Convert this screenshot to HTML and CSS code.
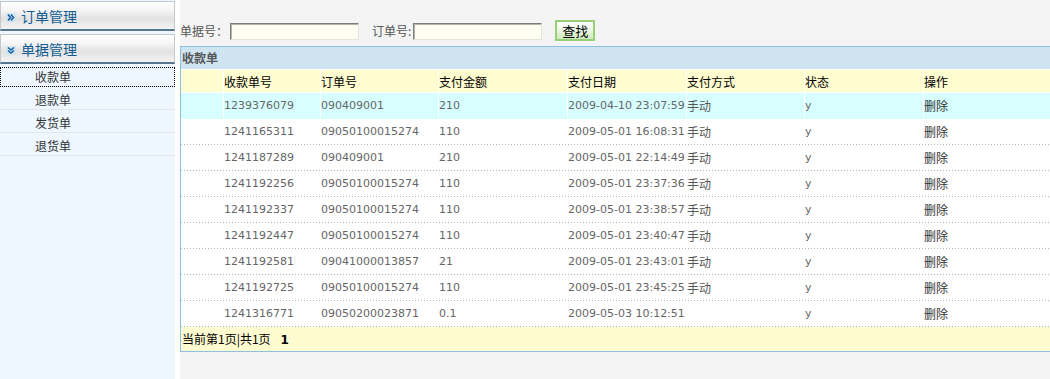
FILE: index.html
```html
<!DOCTYPE html>
<html lang="zh-CN">
<head>
<meta charset="utf-8">
<title>收款单</title>
<link rel="stylesheet" href="styles.css">
</head>
<body>
<aside class="sidebar">
  <div class="menu-head">
    <span class="menu-icon"><svg width="10" height="9" viewBox="0 0 10 9"><path d="M2 1.5 L4.5 4.5 L2 7.5 M5 1.5 L7.5 4.5 L5 7.5" fill="none" stroke="#1560a8" stroke-width="1.6"/></svg></span>
    <span class="menu-title">订单管理</span>
  </div>
  <div class="menu-head">
    <span class="menu-icon"><svg width="10" height="9" viewBox="0 0 10 9"><path d="M2 1.5 L5 4 L8 1.5 M2 4.5 L5 7 L8 4.5" fill="none" stroke="#1560a8" stroke-width="1.6"/></svg></span>
    <span class="menu-title">单据管理</span>
  </div>
  <ul class="menu-list">
    <li><a class="menu-link active">收款单</a></li>
    <li><a class="menu-link">退款单</a></li>
    <li><a class="menu-link">发货单</a></li>
    <li><a class="menu-link">退货单</a></li>
  </ul>
</aside>
<main class="main">
  <div class="search">
    <label class="lbl">单据号：</label>
    <span class="input"></span>
    <label class="lbl lbl2">订单号:</label>
    <span class="input"></span>
    <button class="btn">查找</button>
  </div>
  <section class="panel">
    <div class="caption">收款单</div>
    <div class="row head">
      <div class="c"></div><div class="c">收款单号</div><div class="c">订单号</div><div class="c">支付金额</div><div class="c">支付日期</div><div class="c">支付方式</div><div class="c">状态</div><div class="c">操作</div>
    </div>
    <div class="row data hl">
      <div class="c"></div><div class="c n">1239376079</div><div class="c n">090409001</div><div class="c n">210</div><div class="c n">2009-04-10 23:07:59</div><div class="c t">手动</div><div class="c n">y</div><div class="c t op">删除</div>
    </div>
    <div class="row data">
      <div class="c"></div><div class="c n">1241165311</div><div class="c n">09050100015274</div><div class="c n">110</div><div class="c n">2009-05-01 16:08:31</div><div class="c t">手动</div><div class="c n">y</div><div class="c t op">删除</div>
    </div>
    <div class="row data">
      <div class="c"></div><div class="c n">1241187289</div><div class="c n">090409001</div><div class="c n">210</div><div class="c n">2009-05-01 22:14:49</div><div class="c t">手动</div><div class="c n">y</div><div class="c t op">删除</div>
    </div>
    <div class="row data">
      <div class="c"></div><div class="c n">1241192256</div><div class="c n">09050100015274</div><div class="c n">110</div><div class="c n">2009-05-01 23:37:36</div><div class="c t">手动</div><div class="c n">y</div><div class="c t op">删除</div>
    </div>
    <div class="row data">
      <div class="c"></div><div class="c n">1241192337</div><div class="c n">09050100015274</div><div class="c n">110</div><div class="c n">2009-05-01 23:38:57</div><div class="c t">手动</div><div class="c n">y</div><div class="c t op">删除</div>
    </div>
    <div class="row data">
      <div class="c"></div><div class="c n">1241192447</div><div class="c n">09050100015274</div><div class="c n">110</div><div class="c n">2009-05-01 23:40:47</div><div class="c t">手动</div><div class="c n">y</div><div class="c t op">删除</div>
    </div>
    <div class="row data">
      <div class="c"></div><div class="c n">1241192581</div><div class="c n">09041000013857</div><div class="c n">21</div><div class="c n">2009-05-01 23:43:01</div><div class="c t">手动</div><div class="c n">y</div><div class="c t op">删除</div>
    </div>
    <div class="row data">
      <div class="c"></div><div class="c n">1241192725</div><div class="c n">09050100015274</div><div class="c n">110</div><div class="c n">2009-05-01 23:45:25</div><div class="c t">手动</div><div class="c n">y</div><div class="c t op">删除</div>
    </div>
    <div class="row data">
      <div class="c"></div><div class="c n">1241316771</div><div class="c n">09050200023871</div><div class="c n">0.1</div><div class="c n">2009-05-03 10:12:51</div><div class="c t"></div><div class="c n">y</div><div class="c t op">删除</div>
    </div>
    <div class="pager">当前第1页|共1页<b class="page-num">1</b></div>
  </section>
</main>
</body>
</html>
```

FILE: styles.css
```css
html, body {
  margin: 0;
  padding: 0;
  height: 100%;
}
body {
  display: flex;
  background: #fff;
  font-family: "DejaVu Sans", "Noto Sans CJK SC", sans-serif;
  font-size: 12px;
  color: #000;
  overflow: hidden;
}
.sidebar {
  width: 175px;
  flex: none;
  background: #eef6ff;
  height: 100%;
  margin-right: 5px;
}
.menu-head {
  margin-top: 1px;
  height: 27px;
  border: 1px solid #c4c8cc;
  border-bottom: 2px solid #56758f;
  background: linear-gradient(#ffffff 0%, #f6f6f6 30%, #e2e2e2 60%, #eeeeee 90%, #f4f4f4 100%);
  display: flex;
  align-items: center;
  padding-left: 5px;
}
.menu-head + .menu-head {
  margin-top: 3px;
}
.menu-icon {
  width: 10px;
  height: 9px;
  background: #d4e6f0;
  display: flex;
  margin-top: 3px;
}
.menu-title {
  margin-left: 5px;
  font-family: "Noto Sans CJK SC", sans-serif;
  font-size: 14px;
  color: #125c92;
  line-height: 16px;
}
.menu-list {
  list-style: none;
  margin: 0;
  padding: 0;
}
.menu-list li {
  height: 18px;
  padding-top: 4px;
  border-bottom: 1px solid #e2e6ea;
}
.menu-link {
  display: block;
  margin: 0 1px;
  height: 18px;
  line-height: 18px;
  padding-left: 34px;
  color: #333;
  font-family: "Noto Sans CJK SC", sans-serif;
  font-size: 12px;
}
.menu-link.active {
  outline: 1px dotted #000;
}
.main {
  flex: 1;
  box-sizing: border-box;
  background: #f4f4f4;
  height: 100%;
  padding-top: 20px;
}
.search {
  display: flex;
  align-items: center;
  height: 21px;
}
.lbl {
  color: #555;
  font-family: "Noto Sans CJK SC", sans-serif;
  font-size: 12px;
  margin-right: 2px;
}
.lbl2 {
  margin-left: 13px;
}
.input {
  display: block;
  box-sizing: border-box;
  width: 129px;
  height: 17px;
  margin-top: 2px;
  background: #fffef2;
  border: 1px solid;
  border-color: #7e7e76 #e4e4dc #e4e4dc #7e7e76;
  box-shadow: inset 1px 1px 0 #b4b4aa;
}
.btn {
  box-sizing: border-box;
  width: 40px;
  height: 21px;
  margin-left: 13px;
  padding: 0;
  border: 2px solid #97d075;
  background: linear-gradient(#ffffff, #f0f9ea 40%, #cfe9bd);
  font-family: "Noto Sans CJK SC", sans-serif;
  font-size: 13px;
  color: #000;
  line-height: 15px;
}
.panel {
  margin-top: 5px;
  border-left: 1px solid #8cc2df;
  border-top: 1px solid #8cc2df;
  border-bottom: 1px solid #8cc2df;
  background: #fff;
}
.caption {
  height: 22px;
  line-height: 22px;
  border-bottom: 1px solid #fff;
  background: #cee4f0;
  color: #555;
  font-weight: bold;
  font-family: "Noto Sans CJK SC", sans-serif;
  padding-left: 1px;
}
.row {
  display: grid;
  grid-template-columns: 42px 97px 118px 129px 119px 118px 119px 1fr;
}
.c {
  box-sizing: border-box;
  border-left: 1px solid #fff;
  white-space: nowrap;
  display: flex;
  align-items: center;
}
.c:first-child {
  border-left: 0;
}
.head {
  height: 23px;
  border-bottom: 1px solid #fff;
  box-sizing: border-box;
  background: #fffcd0;
  font-family: "Noto Sans CJK SC", sans-serif;
  font-size: 12px;
  color: #000;
}
.data {
  height: 26px;
  box-sizing: border-box;
  padding-bottom: 1px;
  background-image: repeating-linear-gradient(to right, #b4b4b4 0 1px, transparent 1px 3px);
  background-size: 100% 1px;
  background-position: left bottom;
  background-repeat: no-repeat;
}
.data .c {
  border-left-color: transparent;
}
.data.hl {
  background: #d7ffff;
}
.data.hl .c {
  border-left-color: #fff;
}
.data.hl .c:first-child {
  border-left: 0;
}
.n {
  font-family: "DejaVu Sans", sans-serif;
  font-size: 11px;
  color: #666;
}
.t {
  font-family: "Noto Sans CJK SC", sans-serif;
  font-size: 12px;
  color: #555;
}
.op {
  color: #333;
}
.pager {
  height: 24px;
  line-height: 24px;
  background: #fffbd1;
  padding-left: 1px;
  font-family: "Noto Sans CJK SC", sans-serif;
  font-size: 12px;
  color: #000;
}
.page-num {
  margin-left: 10px;
  font-family: "DejaVu Sans", sans-serif;
}
```
